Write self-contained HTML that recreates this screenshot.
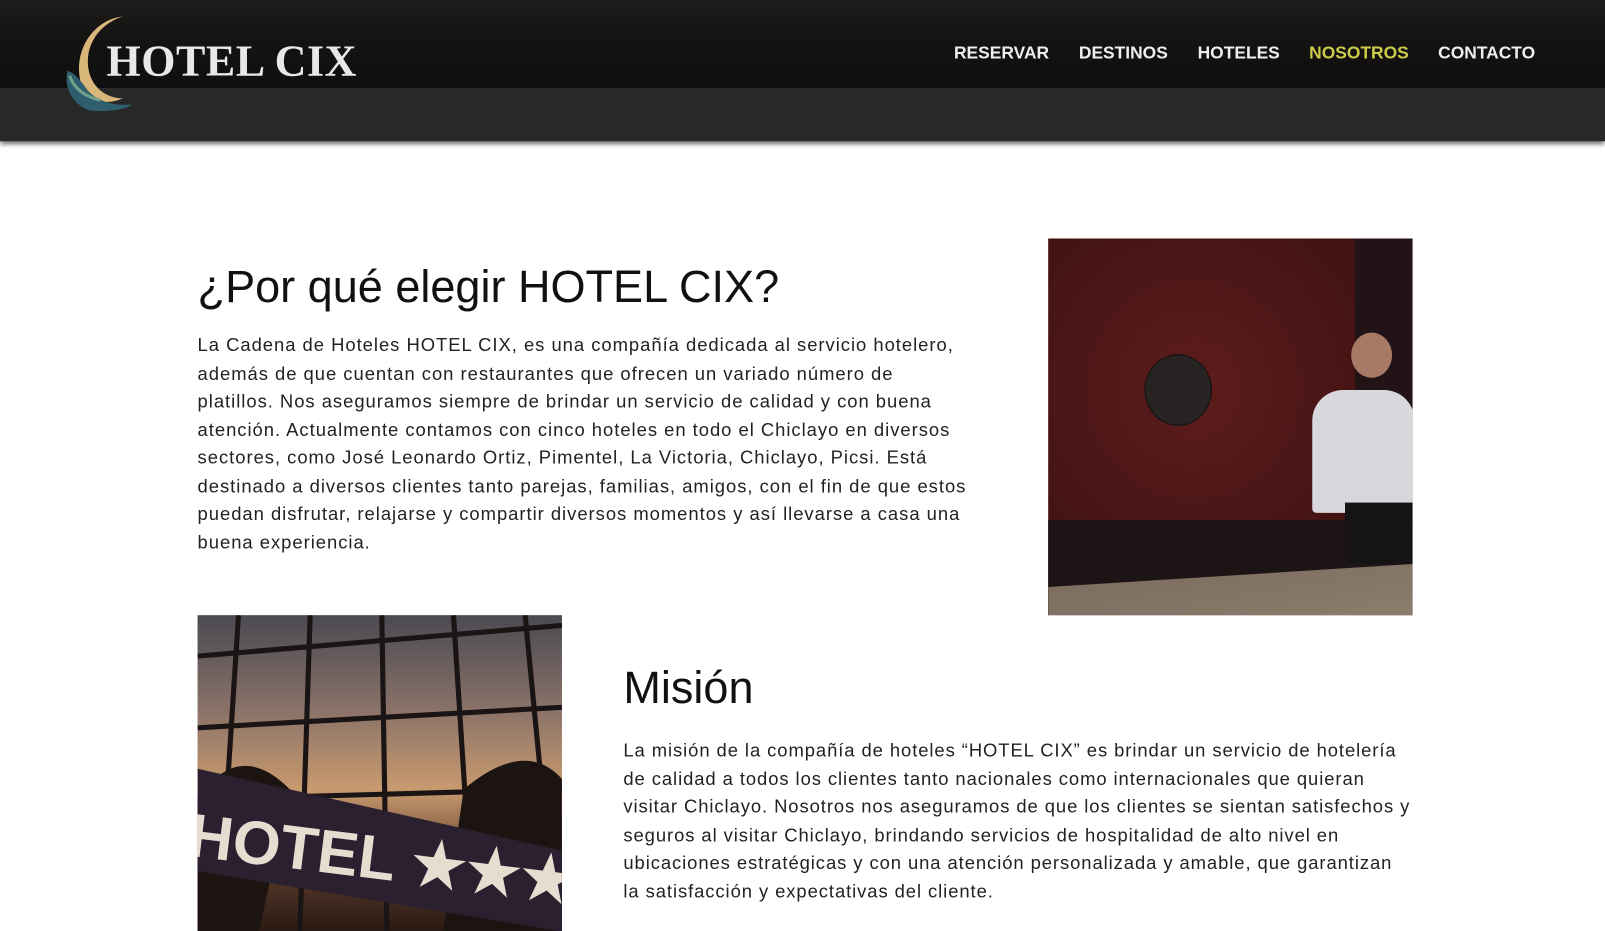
<!DOCTYPE html>
<html><head><meta charset="utf-8"><style>
*{margin:0;padding:0;box-sizing:border-box}
body{width:1605px;height:931px;overflow:hidden;background:#fff;font-family:"Liberation Sans",sans-serif;color:#222;position:relative}
#w{position:absolute;left:0;top:0;width:1568px;height:910px;transform:scale(1.0236);transform-origin:0 0}
.top{position:absolute;left:0;top:0;width:1568px;height:86px;background:linear-gradient(180deg,#1e1c1a 0%,#141312 45%,#0f0f0f 100%)}
.band{position:absolute;left:0;top:86px;width:1568px;height:52px;background:#282828;box-shadow:0 3px 4px rgba(0,0,0,.5)}
.logo{position:absolute;left:104px;top:36px;font-family:"Liberation Serif",serif;font-weight:bold;font-size:43px;color:#e8e8e8;letter-spacing:0.5px}
nav{position:absolute;top:42px;left:932px;font-weight:bold;font-size:17px;color:#eee;white-space:nowrap}
nav span{position:absolute;top:0}
h1{position:absolute;font-weight:normal;color:#111;font-size:44px;white-space:nowrap}
p{position:absolute;font-size:18px;line-height:27.5px;color:#222;white-space:nowrap;letter-spacing:0.95px}
</style></head><body><div id="w">
<div class="top"></div>
<div class="band"></div>
<svg style="position:absolute;left:58px;top:14px" width="80" height="98" viewBox="0 0 80 98">
<path d="M62 2 C30 6 12 40 22 70 C28 84 45 90 62 82 C42 82 26 66 28 42 C30 22 44 8 62 2Z" fill="#d9b77a"/>
<path d="M8 55 C4 70 12 88 30 94 C48 96 70 92 70 88 C52 90 34 84 26 72 C20 64 16 58 8 55Z" fill="#2f5f6e"/>
<path d="M10 60 C14 72 24 80 40 84" stroke="#6fa08a" stroke-width="3" fill="none"/>
</svg>
<div class="logo">HOTEL CIX</div>
<nav><span style="left:0">RESERVAR</span><span style="left:122px">DESTINOS</span><span style="left:238px">HOTELES</span><span style="left:347px;color:#cfcb4a">NOSOTROS</span><span style="left:473px">CONTACTO</span></nav>

<h1 style="left:193px;top:256px">¿Por qué elegir HOTEL CIX?</h1>
<p style="left:193px;top:324px">La Cadena de Hoteles HOTEL CIX, es una compañía dedicada al servicio hotelero,<br>además de que cuentan con restaurantes que ofrecen un variado número de<br>platillos. Nos aseguramos siempre de brindar un servicio de calidad y con buena<br>atención. Actualmente contamos con cinco hoteles en todo el Chiclayo en diversos<br>sectores, como José Leonardo Ortiz, Pimentel, La Victoria, Chiclayo, Picsi. Está<br>destinado a diversos clientes tanto parejas, familias, amigos, con el fin de que estos<br>puedan disfrutar, relajarse y compartir diversos momentos y así llevarse a casa una<br>buena experiencia.</p>

<div style="position:absolute;left:1024px;top:233px;width:356px;height:368px;overflow:hidden;background:radial-gradient(ellipse at 40% 40%,#5e1c1c,#3f1212 70%,#2a0d0d)">
<div style="position:absolute;left:300px;top:0;width:56px;height:280px;background:#221316"></div>
<div style="position:absolute;left:94px;top:113px;width:66px;height:70px;border-radius:50%;background:#262322;border:1px solid #111"></div>
<div style="position:absolute;left:0;top:275px;width:356px;height:93px;background:#1d1416"></div>
<div style="position:absolute;left:0;top:318px;width:356px;height:50px;background:linear-gradient(170deg,#7a6a5c,#8c7c6c);clip-path:polygon(0 45%,100% 0,100% 100%,0 100%)"></div>
<div style="position:absolute;left:296px;top:92px;width:40px;height:44px;border-radius:50%;background:#a77a66"></div>
<div style="position:absolute;left:258px;top:148px;width:100px;height:120px;border-radius:30px 30px 4px 4px;background:#d8d8dc"></div>
<div style="position:absolute;left:290px;top:258px;width:66px;height:60px;background:#151313"></div>
</div>

<div style="position:absolute;left:193px;top:601px;width:356px;height:309px;overflow:hidden;background:linear-gradient(180deg,#4a4a52 0%,#8a7268 30%,#c89a6e 55%,#5a3a2c 80%,#2a1a14 100%)">
<svg width="356" height="309" style="position:absolute;left:0;top:0">
<g stroke="#1a1414" stroke-width="5" fill="none"><path d="M40 0 L20 309"/><path d="M110 0 L100 309"/><path d="M180 0 L185 309"/><path d="M250 0 L270 309"/><path d="M320 0 L350 309"/><path d="M0 40 L356 10"/><path d="M0 110 L356 90"/><path d="M0 180 L356 170"/></g>
<path d="M0 180 Q40 120 90 170 L60 309 L0 309Z" fill="#1c1410"/>
<path d="M260 170 Q320 120 356 160 L356 309 L240 309Z" fill="#1c1410"/>
<path d="M0 150 L356 230 L356 309 L0 250Z" fill="#2a2030"/>
<text x="-10" y="236" font-family="Liberation Sans" font-weight="bold" font-size="60" fill="#e6ddd0" transform="rotate(7 0 230)">HOTEL ★★★</text>
</svg>
</div>

<h1 style="left:609px;top:648px">Misión</h1>
<p style="left:609px;top:720px;letter-spacing:0.9px">La misión de la compañía de hoteles “HOTEL CIX” es brindar un servicio de hotelería<br>de calidad a todos los clientes tanto nacionales como internacionales que quieran<br>visitar Chiclayo. Nosotros nos aseguramos de que los clientes se sientan satisfechos y<br>seguros al visitar Chiclayo, brindando servicios de hospitalidad de alto nivel en<br>ubicaciones estratégicas y con una atención personalizada y amable, que garantizan<br>la satisfacción y expectativas del cliente.</p>
</div></body></html>
